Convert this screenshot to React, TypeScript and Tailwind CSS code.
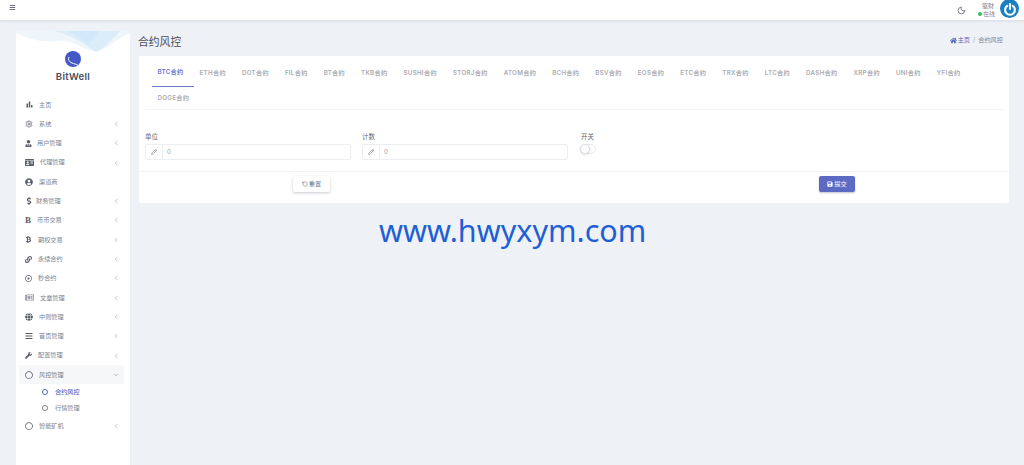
import React from 'react';
import { ChevronLeft, ChevronDown, Menu, Moon, Pencil, RotateCcw, Settings } from 'lucide-react';
import {
    FaBtc, FaDollarSign, FaHome, FaIdCard, FaLink, FaRegCircle, FaRegDotCircle, FaRegNewspaper,
    FaSave, FaUserCircle, FaUserTie, FaWrench, FaGlobe, FaBars
} from 'react-icons/fa';
import { MdBarChart } from 'react-icons/md';

const FONT = "font-['Inter','Noto_Sans_CJK_SC',sans-serif]";

const tabs = ['BTC', 'ETH', 'DOT', 'FIL', 'BT', 'TKB', 'SUSHI', 'STORJ', 'ATOM', 'BCH', 'BSV', 'EOS', 'ETC', 'TRX', 'LTC', 'DASH', 'XRP', 'UNI', 'YFI', 'DOGE'];

const menuTop = [
    { label: '主页', icon: <MdBarChart size={9} />, gap: 'gap-[5px]', arrow: false },
    { label: '系统', icon: <Settings size={8} />, gap: 'gap-[6px]', arrow: true },
    { label: '用户管理', icon: <FaUserTie size={7} />, gap: 'gap-[5px]', arrow: true },
    { label: '代理管理', icon: <FaIdCard size={9} />, gap: 'gap-[6px]', arrow: true },
    { label: '渠道商', icon: <FaUserCircle size={8} />, gap: 'gap-[6px]', arrow: false },
    { label: '财务管理', icon: <FaDollarSign size={8} />, gap: 'gap-[3px]', arrow: true },
    { label: '币币交易', icon: <span className="font-['Liberation_Serif',serif] font-bold text-[9px] leading-none">B</span>, gap: 'gap-[6px]', arrow: true },
    { label: '期权交易', icon: <FaBtc size={7} />, gap: 'gap-[6px]', arrow: true },
    { label: '永续合约', icon: <FaLink size={7} />, gap: 'gap-[6px]', arrow: true },
    { label: '秒合约', icon: <FaRegDotCircle size={7} />, gap: 'gap-[6px]', arrow: true },
    { label: '文章管理', icon: <FaRegNewspaper size={9} className="text-[#8a8e98]" />, gap: 'gap-[6px]', arrow: true },
    { label: '中则管理', icon: <FaGlobe size={8} />, gap: 'gap-[6px]', arrow: true },
    { label: '首页管理', icon: <FaBars size={8} />, gap: 'gap-[6px]', arrow: true },
    { label: '配置管理', icon: <FaWrench size={7} />, gap: 'gap-[6px]', arrow: true },
];

const MenuRow: React.FC<{ label: string; icon: React.ReactNode; gap: string; arrow?: boolean; open?: boolean }> = ({ label, icon, gap, arrow, open }) => (
    <div className={`ml-[3px] mr-[6px] h-[19.3px] pl-[6px] pr-[5px] flex items-center rounded-[2px] text-[#7d818c] ${gap} ${open ? 'bg-[#f6f7f9]' : ''}`}>
        <span className="text-[#5a5e6a] flex items-center justify-center">{icon}</span>
        <span className="text-[6.2px] leading-none flex-1">{label}</span>
        {open ? <ChevronDown size={6} /> : arrow ? <ChevronLeft size={6} /> : null}
    </div>
);

const SubRow: React.FC<{ label: string; active?: boolean }> = ({ label, active }) => (
    <div className={`h-4 pl-[26px] flex items-center gap-[7px] text-[6.2px] leading-none ${active ? 'text-[#5565c4] font-medium' : 'text-[#7d818c]'}`}>
        <span className={`w-[6px] h-[6px] rounded-full border ${active ? 'border-[#5565c4]' : 'border-[#7d818c]'}`} />
        {label}
    </div>
);

const Field: React.FC<{ label: string }> = ({ label }) => (
    <div className="w-[206px]">
        <div className="text-[6.5px] leading-none text-[#666b76] h-[13px] flex items-end pb-[4px]">{label}</div>
        <div className="h-4 border border-[#eceef2] rounded-[2px] flex items-center text-[6.2px] text-[#9a9ea8]">
            <span className="w-[17px] h-full border-r border-[#eceef2] flex items-center justify-center text-[#666b76]"><Pencil size={6} /></span>
            <span className="pl-[4px]">0</span>
        </div>
    </div>
);

export default function App() {
    return (
        <div className={`relative h-screen overflow-hidden flex flex-col bg-[#eef1f6] ${FONT}`}>
            <header className="h-5 shrink-0 bg-white shadow-[0_1px_3px_rgba(60,70,100,0.12)] flex items-center pl-[9px] pr-[5px] z-10">
                <Menu size={7} strokeWidth={3} className="text-[#555a66] -mt-[6px]" />
                <div className="flex-1" />
                <Moon size={9} className="text-[#555a66] mr-[12px]" />
                <div className="flex flex-col items-end text-[6px] leading-none text-[#7d818c] mr-[5px] gap-[2px]">
                    <span className="mr-[1px]">驱财</span>
                    <span className="flex items-center gap-[1px]"><span className="w-[3.5px] h-[3.5px] rounded-full bg-[#22c55e]" />在线</span>
                </div>
                <div className="w-[19px] h-[19px] rounded-full bg-[#1b7fc4] flex items-center justify-center -mt-[3px]">
                    <svg viewBox="0 0 20 20" className="w-[14px] h-[14px]" fill="none" stroke="white" strokeWidth="3" strokeLinecap="round">
                        <path d="M6 5.5 A7 7 0 1 0 14 5.5" />
                        <path d="M10 3 V10" />
                    </svg>
                </div>
            </header>

            <div className="flex-1 flex pl-4 pr-[15px] pt-[11px] min-h-0">
                <aside className="w-[114px] shrink-0 bg-white flex flex-col">
                    <div className="relative h-[64px] shrink-0 flex flex-col items-center">
                        <svg viewBox="0 0 114 22" className="absolute top-0 left-0 w-[114px] h-[22px]">
                            <path d="M0 0 H114 V2 C100 8 92 18 80 21 C66 18 56 8 42 10 C26 12 12 8 0 2 Z" fill="#eef6fc" />
                            <path d="M38 0 H104 C96 8 90 16 80 21 C70 14 56 4 38 0 Z" fill="#dcedfa" />
                            <path d="M50 0 H84 C80 6 78 10 72 13 C66 8 58 3 50 0 Z" fill="#cfe6f8" opacity="0.7" />
                        </svg>
                        <div className="w-4 h-4 mt-[20px] rounded-full bg-[#4458c8] overflow-hidden relative">
                            <svg viewBox="0 0 16 16" className="w-4 h-4" fill="none" stroke="white" strokeWidth="1">
                                <path d="M4 6 C2 10 6 12 10 13 C12 13.5 13 14 13.5 15" />
                            </svg>
                        </div>
                        <div className="mt-[5px] text-[9.6px] leading-none font-semibold tracking-[0.3px] text-[#4a4e5a]">BitWell</div>
                    </div>
                    {menuTop.map(m => <MenuRow key={m.label} {...m} />)}
                    <MenuRow label="风控管理" icon={<FaRegCircle size={8} />} gap="gap-[6px]" open />
                    <SubRow label="合约风控" active />
                    <SubRow label="行情管理" />
                    <MenuRow label="智能矿机" icon={<FaRegCircle size={8} />} gap="gap-[6px]" arrow />
                </aside>

                <main className="ml-[9px] flex-1 min-w-0">
                    <div className="h-[25px] flex items-start justify-between">
                        <h1 className="text-[10.8px] leading-none text-[#4a4e5a] mt-[5px] pt-[2px] -ml-px">合约风控</h1>
                        <div className="flex items-center text-[6.2px] leading-none mt-[6px] mr-[6px] text-[#5565c4]">
                            <FaHome size={7} className="mr-[1px]" />
                            <span>主页</span>
                            <span className="mx-[3px] text-[#a0a4ae]">/</span>
                            <span className="text-[#7d818c]">合约风控</span>
                        </div>
                    </div>

                    <section className="h-[147px] bg-white rounded-[2px] pt-[6px]">
                        <div className="mx-[6px] h-[48px] pl-[6.5px] border-b border-[#f3f4f7] flex flex-wrap content-start">
                            {tabs.map((t, i) => (
                                <div
                                    key={t}
                                    className={`h-[25px] pl-[6px] pr-[10px] pb-[3px] flex items-center text-[6.2px] leading-none font-semibold tracking-[0.3px] ${i === 0 ? 'text-[#6a77cc] border-b border-[#6a77cc]' : 'text-[#aaacb2]'}`}
                                >
                                    {t}合约
                                </div>
                            ))}
                        </div>
                        <div className="h-[62px] px-[6px] pt-[21px] flex border-b border-[#f3f4f7]">
                            <Field label="单位" />
                            <div className="w-[11px]" />
                            <Field label="计数" />
                            <div className="ml-[12px]">
                                <div className="text-[6.5px] leading-none text-[#666b76] h-[13px] flex items-end pb-[4px] ml-[1px]">开关</div>
                                <div className="w-4 h-[10px] rounded-full border border-[#e8eaef] relative">
                                    <span className="absolute -left-px -top-px w-[10px] h-[10px] rounded-full bg-white border border-[#dcdfe6] shadow-sm" />
                                </div>
                            </div>
                        </div>
                        <div className="px-[154px] pt-[4px] flex justify-between">
                            <button className="w-[37px] h-4 bg-white rounded-[2px] shadow-[0_1px_3px_rgba(40,50,80,0.25)] flex items-center justify-center gap-[1px] text-[6.2px] text-[#666b76]">
                                <RotateCcw size={6} />重置
                            </button>
                            <button className="w-[36px] h-4 bg-[#5c6ac4] rounded-[2px] shadow-[0_1px_2px_rgba(40,50,80,0.3)] flex items-center justify-center gap-[1px] text-[6.2px] text-white">
                                <FaSave size={6} />提交
                            </button>
                        </div>
                    </section>
                </main>
            </div>

            <div className="absolute left-[379px] top-[208px] text-[30.5px] leading-[44px] text-[#1f5fd6] font-['Noto_Sans',sans-serif] whitespace-nowrap">
                www.hwyxym.com
            </div>
        </div>
    );
}
